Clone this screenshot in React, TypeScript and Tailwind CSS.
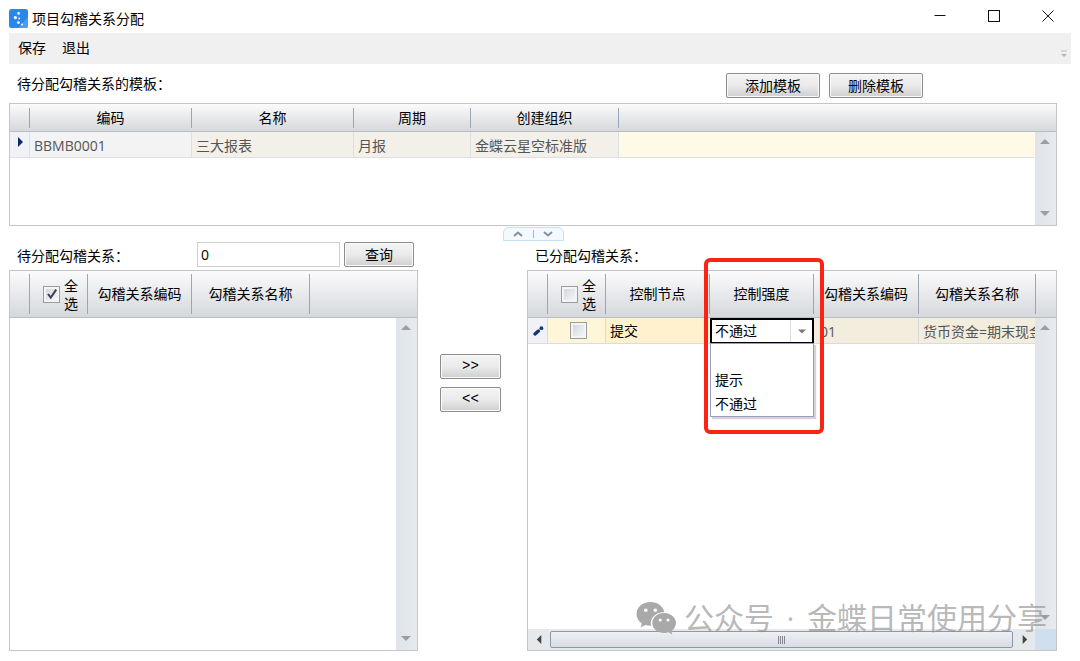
import type { ReactNode } from 'react'
import clsx from 'clsx'

const TEMPLATE_COLUMNS = ['编码', '名称', '周期', '创建组织']
const STRENGTH_OPTIONS = ['', '提示', '不通过']

function PushButton({ children, className }: { children: ReactNode; className?: string }) {
  return (
    <button
      type="button"
      className={clsx(
        'h-[25px] rounded-xs border border-[#8c8c8c] bg-linear-to-b from-[#f3f3f3] from-0% via-[#ebebeb] via-50% to-[#cfcfcf] to-100% text-center leading-[23px] text-black shadow-[inset_0_0_0_1px_#fafafa]',
        className
      )}
    >
      {children}
    </button>
  )
}

function CheckBox({ label, checked = false }: { label: string; checked?: boolean }) {
  return (
    <span className="inline-grid size-[17px] shrink-0 place-items-center">
      <input
        type="checkbox"
        aria-label={label}
        defaultChecked={checked}
        className="peer col-start-1 row-start-1 size-[17px] appearance-none border border-[#9b9c9f] bg-linear-to-br from-[#cdd1d9] to-[#fbfbfc] shadow-[inset_0_0_0_2px_#f4f4f4]"
      />
      <svg
        viewBox="0 0 12 12"
        className="pointer-events-none invisible col-start-1 row-start-1 size-3 peer-checked:visible"
      >
        <path d="M2 6 L4.8 9.6 L10.2 1.6" fill="none" stroke="#3c4252" strokeWidth="2" />
      </svg>
    </span>
  )
}

function Arrow({ dir, className }: { dir: 'up' | 'down' | 'left' | 'right'; className: string }) {
  const points = {
    up: '0,7 5,2 10,7',
    down: '0,3 5,8 10,3',
    left: '7,0 2,5 7,10',
    right: '3,0 8,5 3,10'
  }
  return (
    <svg viewBox="0 0 10 10" className={className}>
      <polygon points={points[dir]} fill="currentColor" />
    </svg>
  )
}

function VerticalScrollbar() {
  return (
    <div className="z-10 col-start-2 row-start-2 flex flex-col items-center justify-between bg-linear-to-r from-[#dfe4e8] to-[#e8ebee] pt-[5px] pr-[2px] pb-[7px] text-[#9b9fa3]">
      <Arrow dir="up" className="size-[10px]" />
      <Arrow dir="down" className="size-[10px]" />
    </div>
  )
}

// Header cell with the short separator that does not touch the edges
function HeadCell({ tall = false, last = false, children }: { tall?: boolean; last?: boolean; children?: ReactNode }) {
  return (
    <th className="border-b border-[#b9bdc4] p-0 font-normal">
      <div
        className={clsx(
          'flex items-center justify-center whitespace-nowrap',
          tall ? 'h-10' : 'h-5',
          !last && 'border-r border-[#9ca5b3]'
        )}
      >
        {children}
      </div>
    </th>
  )
}

function SelectAll({ checked, label }: { checked?: boolean; label: string }) {
  return (
    <span className="flex items-center gap-1 pl-1">
      <CheckBox label={label} checked={checked} />
      <span className="w-[14px] pt-px leading-[18px] whitespace-normal">全选</span>
    </span>
  )
}

function TitleBar() {
  return (
    <header className="flex h-[33px] items-start pr-[5px] pl-[9px]">
      <div className="flex items-center gap-1 pt-[9px]">
        <svg viewBox="0 0 19 19" className="size-[19px]">
          <rect width="19" height="19" rx="2.5" fill="#2a87ea" />
          <path d="M9 19 L19 8 V16.5 Q19 19 16.5 19 Z" fill="#4a9cf0" />
          <g fill="#fff">
            <circle cx="9.6" cy="4.4" r="1.3" />
            <circle cx="6.4" cy="8.6" r="1.6" />
            <circle cx="10.2" cy="9.4" r="0.9" />
            <circle cx="9.4" cy="13.6" r="1.4" />
            <circle cx="13" cy="15.4" r="1" />
          </g>
        </svg>
        <h1 className="leading-[18px]">项目勾稽关系分配</h1>
      </div>
      <div className="ml-auto flex">
        <button type="button" aria-label="最小化" className="flex h-8 w-[54px] items-center justify-center">
          <svg viewBox="0 0 12 12" className="size-3">
            <path d="M0.5 5.5 H11.5" stroke="#111" />
          </svg>
        </button>
        <button type="button" aria-label="最大化" className="flex h-8 w-[54px] items-center justify-center">
          <svg viewBox="0 0 12 12" className="size-3">
            <rect x="0.5" y="0.5" width="11" height="11" fill="none" stroke="#111" />
          </svg>
        </button>
        <button type="button" aria-label="关闭" className="flex h-8 w-[54px] items-center justify-center">
          <svg viewBox="0 0 12 12" className="size-3">
            <path d="M0.5 0.5 L11.5 11.5 M11.5 0.5 L0.5 11.5" stroke="#111" />
          </svg>
        </button>
      </div>
    </header>
  )
}

function MenuBar() {
  return (
    <nav className="mx-[9px] flex h-[31px] items-center gap-4 bg-[#f0f0f0] pr-[3px] pb-[2px] pl-[9px]">
      <button type="button">保存</button>
      <button type="button">退出</button>
      <svg viewBox="0 0 8 8" className="mb-1 ml-auto size-2 self-end">
        <path d="M1 1 H7" stroke="#bdbdbd" />
        <polygon points="1,4 7,4 4,7" fill="#b4b4b4" />
      </svg>
    </nav>
  )
}

function TemplateGrid() {
  return (
    <div className="grid h-[123px] grid-cols-[minmax(0,1fr)_21px] grid-rows-[28px_1fr] overflow-hidden border border-[#c4c6c9]">
      <table className="col-span-2 col-start-1 row-span-2 row-start-1 w-full table-fixed border-separate border-spacing-0 self-start">
        <colgroup>
          <col className="w-5" />
          <col className="w-[162px]" />
          <col className="w-[162px]" />
          <col className="w-[117px]" />
          <col className="w-[148px]" />
          <col />
        </colgroup>
        <thead>
          <tr className="h-7 bg-linear-to-b from-[#fbfbfc] to-[#d4d7db]">
            <HeadCell />
            {TEMPLATE_COLUMNS.map((name) => (
              <HeadCell key={name}>{name}</HeadCell>
            ))}
            <HeadCell last />
          </tr>
        </thead>
        <tbody>
          <tr className="h-[26px] text-[#555] *:border-r *:border-b *:border-[#dddfe4] *:p-0 *:pt-[3px] *:pl-1 *:leading-5">
            <td className="bg-[#f0f2f8]">
              <Arrow dir="right" className="-mt-2 ml-px size-[10px] text-[#0a2c66]" />
            </td>
            <td className="bg-[#f3f3f3]">BBMB0001</td>
            <td className="bg-[#f3f0e9]">三大报表</td>
            <td className="bg-[#f3f0e9]">月报</td>
            <td className="bg-[#f3f0e9]">金蝶云星空标准版</td>
            <td className="bg-[#fff9e7]" />
          </tr>
        </tbody>
      </table>
      <VerticalScrollbar />
    </div>
  )
}

function Splitter() {
  return (
    <div className="mb-px flex justify-center">
      <div className="mt-px flex h-[14px] w-[61px] items-center rounded-t-md border border-[#c4e1f3] bg-[#f3faff] text-[#8b8f94]">
        <button type="button" aria-label="收起" className="flex flex-1 justify-center">
          <svg viewBox="0 0 10 6" className="h-[6px] w-[10px]">
            <path d="M1 5 L5 1.5 L9 5" fill="none" stroke="currentColor" strokeWidth="2" />
          </svg>
        </button>
        <span className="h-2 w-px bg-[#b0b4b8]" />
        <button type="button" aria-label="展开" className="flex flex-1 justify-center">
          <svg viewBox="0 0 10 6" className="h-[6px] w-[10px]">
            <path d="M1 1 L5 4.5 L9 1" fill="none" stroke="currentColor" strokeWidth="2" />
          </svg>
        </button>
      </div>
    </div>
  )
}

function PendingGrid() {
  return (
    <div className="grid flex-1 grid-cols-[minmax(0,1fr)_21px] grid-rows-[47px_1fr] overflow-hidden border border-[#c4c6c9]">
      <table className="col-span-2 col-start-1 row-span-2 row-start-1 w-full table-fixed border-separate border-spacing-0 self-start">
        <colgroup>
          <col className="w-5" />
          <col className="w-[58px]" />
          <col className="w-[104px]" />
          <col className="w-[118px]" />
          <col />
        </colgroup>
        <thead>
          <tr className="h-[47px] bg-linear-to-b from-[#fbfbfc] to-[#d4d7db]">
            <HeadCell tall />
            <HeadCell tall>
              <SelectAll label="全选待分配" checked />
            </HeadCell>
            <HeadCell tall>勾稽关系编码</HeadCell>
            <HeadCell tall>勾稽关系名称</HeadCell>
            <HeadCell tall last />
          </tr>
        </thead>
      </table>
      <VerticalScrollbar />
    </div>
  )
}

function StrengthCell() {
  return (
    <div className="relative h-[26px]">
      <div className="grid h-[26px] grid-cols-[1fr_22px] border-2 border-black bg-white">
        <select
          aria-label="控制强度"
          defaultValue="不通过"
          className="col-span-2 col-start-1 row-start-1 w-full appearance-none pl-[3px] leading-[22px] text-black outline-none"
        >
          {STRENGTH_OPTIONS.map((option) => (
            <option key={option}>{option}</option>
          ))}
        </select>
        <span className="pointer-events-none col-start-2 row-start-1 flex items-center justify-center border-l border-[#dcdcdc] text-[#7b7b7b]">
          <Arrow dir="down" className="size-2" />
        </span>
      </div>
      <ul
        role="listbox"
        aria-label="控制强度选项"
        className="absolute top-[25px] left-0 z-20 w-full border border-[#9c9cc0] bg-white text-black shadow-[2px_2px_1px_#d3d3d8]"
      >
        {STRENGTH_OPTIONS.map((option) => (
          <li key={option} role="option" aria-selected={option === '不通过'} className="h-6 pl-1 leading-6">
            {option}
          </li>
        ))}
      </ul>
      {/* Highlight frame around the column */}
      <div className="pointer-events-none absolute -top-[60px] -right-[10px] -left-[6px] z-30 h-[176px] rounded-md border-4 border-[#fb2314]" />
    </div>
  )
}

function AssignedGrid() {
  return (
    <div className="grid flex-1 grid-cols-[minmax(0,1fr)_21px] grid-rows-[47px_1fr_21px] border border-[#c4c6c9]">
      <table className="col-span-2 col-start-1 row-span-2 row-start-1 w-full table-fixed border-separate border-spacing-0 self-start">
        <colgroup>
          <col className="w-5" />
          <col className="w-[58px]" />
          <col className="w-[104px]" />
          <col className="w-[104px]" />
          <col className="w-[105px]" />
          <col className="w-[117px]" />
          <col />
        </colgroup>
        <thead>
          <tr className="h-[47px] bg-linear-to-b from-[#fbfbfc] to-[#d4d7db]">
            <HeadCell tall />
            <HeadCell tall>
              <SelectAll label="全选已分配" />
            </HeadCell>
            <HeadCell tall>控制节点</HeadCell>
            <HeadCell tall>控制强度</HeadCell>
            <HeadCell tall>勾稽关系编码</HeadCell>
            <HeadCell tall>勾稽关系名称</HeadCell>
            <HeadCell tall last />
          </tr>
        </thead>
        <tbody>
          <tr className="h-[26px] text-[#555] *:p-0">
            <td className="border-r border-b border-[#d9dbe0] bg-[#f0f2f8]">
              <svg viewBox="0 0 12 12" className="mx-auto size-3">
                <path d="M3 9 L6.4 6" stroke="#16366f" strokeWidth="3.4" strokeLinecap="round" />
                <circle cx="9.4" cy="3.2" r="1.9" fill="#16366f" />
              </svg>
            </td>
            <td className="border-r border-b border-[#d9dbe0] bg-[#fff5d8]">
              <div className="flex justify-center pl-1">
                <CheckBox label="选择提交" />
              </div>
            </td>
            <td className="border-b border-[#d9dbe0] bg-[#fff1cd]">
              <div className="pl-1 text-black">提交</div>
            </td>
            <td>
              <StrengthCell />
            </td>
            <td className="border-r border-b border-[#d9dbe0] bg-[#f2eddc]">
              <div className="pt-[3px] pl-[6px] leading-5">01</div>
            </td>
            <td className="border-b border-[#d9dbe0] bg-[#f2eddc]">
              <div className="overflow-hidden pt-[3px] pl-1 leading-5 whitespace-nowrap">货币资金=期末现金</div>
            </td>
            <td />
          </tr>
        </tbody>
      </table>
      <VerticalScrollbar />
      <div className="col-start-1 row-start-3 flex items-center bg-[#e6e9ec] text-[#444]">
        <span className="flex w-[22px] justify-center">
          <Arrow dir="left" className="size-[9px]" />
        </span>
        <div className="flex h-[17px] flex-1 items-center justify-center gap-px rounded-xs border border-[#8f98a8] bg-linear-to-b from-[#eef0f4] to-[#d8dce3]">
          <span className="h-2 w-px bg-[#83878f]" />
          <span className="h-2 w-px bg-[#83878f]" />
          <span className="h-2 w-px bg-[#83878f]" />
          <span className="h-2 w-px bg-[#83878f]" />
        </div>
        <span className="flex w-[22px] justify-center">
          <Arrow dir="right" className="size-[9px]" />
        </span>
      </div>
      <div className="col-start-2 row-start-3 bg-[#d0dfed]" />
    </div>
  )
}

function Watermark() {
  return (
    <div className="pointer-events-none absolute right-[33px] bottom-[21px] z-40 flex items-center text-[30px] leading-[44px] whitespace-nowrap text-[#8f8f8f]/65">
      <svg viewBox="0 0 40 34" className="mr-2 h-[34px] w-10" fill="#a9a9a9">
        <path d="M14.5 1 C6.5 1 0.5 6.3 0.5 13 C0.5 16.8 2.5 20.2 5.8 22.4 L4.6 26.4 L9.3 24 C11 24.5 12.7 24.8 15 24.7 C13.6 18 18.5 11.3 28.3 11 C27 5 21.5 1 14.5 1 Z" />
        <path d="M28 12 C21 12 16.3 16.6 16.3 22 C16.3 27.6 21.3 32 28 32 C29.6 32 31 31.8 32.4 31.3 L36.4 33.5 L35.3 30 C38.3 28.1 40 25.2 40 22 C40 16.6 34.8 12 28 12 Z" />
        <g fill="#fff">
          <circle cx="9.8" cy="9.3" r="1.8" />
          <circle cx="19.3" cy="9.3" r="1.8" />
          <circle cx="24.2" cy="19" r="1.5" />
          <circle cx="32" cy="19" r="1.5" />
        </g>
      </svg>
      <span>公众号</span>
      <span className="w-[33px] text-center">·</span>
      <span>金蝶日常使用分享</span>
    </div>
  )
}

export default function App() {
  return (
    <div className="relative flex min-h-screen flex-col bg-white font-['Open_Sans','Noto_Sans_CJK_SC',sans-serif] text-[14px] leading-5 text-black">
      <TitleBar />
      <MenuBar />
      <main className="flex flex-1 flex-col pr-[23px] pb-[10px] pl-[9px]">
        <div className="flex h-[39px] items-center gap-[9px] pt-1 pr-[134px] pl-2">
          <h2 className="mr-auto mb-1">待分配勾稽关系的模板：</h2>
          <PushButton className="w-[94px]">添加模板</PushButton>
          <PushButton className="w-[94px]">删除模板</PushButton>
        </div>
        <TemplateGrid />
        <Splitter />

        <div className="grid flex-1 grid-cols-[409fr_109px_530fr]">
          <section className="flex flex-col">
            <div className="flex h-7 items-start gap-1 pr-1 pl-2">
              <label htmlFor="pending" className="mt-1 mr-auto">
                待分配勾稽关系：
              </label>
              <input
                id="pending"
                type="text"
                defaultValue="0"
                className="h-[25px] w-[143px] border border-[#cfcfcf] pl-[3px] outline-none"
              />
              <PushButton className="w-[70px]">查询</PushButton>
            </div>
            <PendingGrid />
          </section>

          <div className="flex flex-col items-center gap-2 pt-28 pr-1 font-['Liberation_Mono',monospace]">
            <PushButton className="w-[61px]">&gt;&gt;</PushButton>
            <PushButton className="w-[61px]">&lt;&lt;</PushButton>
          </div>

          <section className="flex min-w-0 flex-col">
            <h2 className="h-7 pt-1 pl-2">已分配勾稽关系：</h2>
            <AssignedGrid />
          </section>
        </div>
      </main>
      <Watermark />
    </div>
  )
}
